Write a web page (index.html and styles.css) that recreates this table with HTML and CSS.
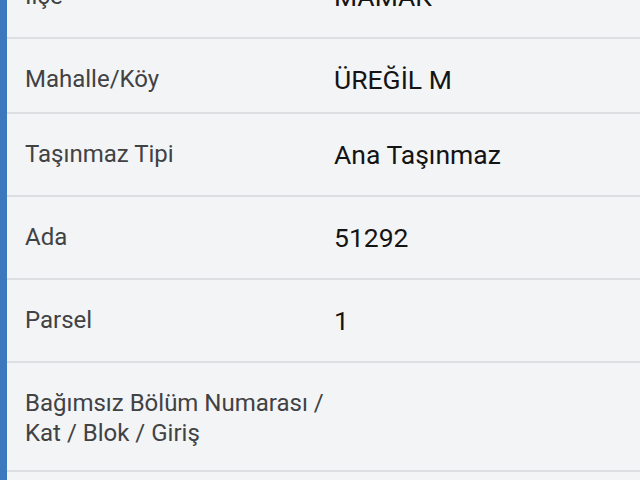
FILE: index.html
```html
<!DOCTYPE html>
<html lang="tr">
<head>
<meta charset="utf-8">
<link rel="stylesheet" href="styles.css">
</head>
<body>
<div class="page">
  <div class="accent"></div>
  <div class="list">
    <div class="row row--first">
      <div class="label">İlçe</div>
      <div class="value">MAMAK</div>
    </div>
    <div class="row row--short">
      <div class="label">Mahalle/Köy</div>
      <div class="value">ÜREĞİL M</div>
    </div>
    <div class="row">
      <div class="label">Taşınmaz Tipi</div>
      <div class="value">Ana Taşınmaz</div>
    </div>
    <div class="row">
      <div class="label">Ada</div>
      <div class="value">51292</div>
    </div>
    <div class="row">
      <div class="label">Parsel</div>
      <div class="value">1</div>
    </div>
    <div class="row row--tall">
      <div class="label">Bağımsız Bölüm Numarası / Kat / Blok / Giriş</div>
      <div class="value"></div>
    </div>
    <div class="row"></div>
  </div>
</div>
</body>
</html>
```

FILE: styles.css
```css
html, body {
  margin: 0;
  padding: 0;
  background: #f3f4f6;
  overflow: hidden;
}

.page {
  display: flex;
  height: 480px;
  overflow: hidden;
  font-family: Roboto, "Noto Sans", sans-serif;
}

.accent {
  width: 7px;
  flex: none;
  background: #3b78bd;
}

.list {
  flex: 1;
  display: flex;
  flex-direction: column;
  margin-top: -44px;
}

.row {
  box-sizing: border-box;
  height: 83px;
  flex: none;
  display: flex;
  align-items: flex-start;
  padding: 25px 0 0 18px;
  border-bottom: 2px solid #dcdee1;
}

.row--short { height: 75px; }
.row--tall { height: 109px; }

.label {
  width: 300px;
  flex: none;
  font-size: 24px;
  line-height: 30px;
  color: #414244;
}

.value {
  margin-left: 9px;
  font-size: 26.5px;
  line-height: 32px;
  color: #141414;
}
```
